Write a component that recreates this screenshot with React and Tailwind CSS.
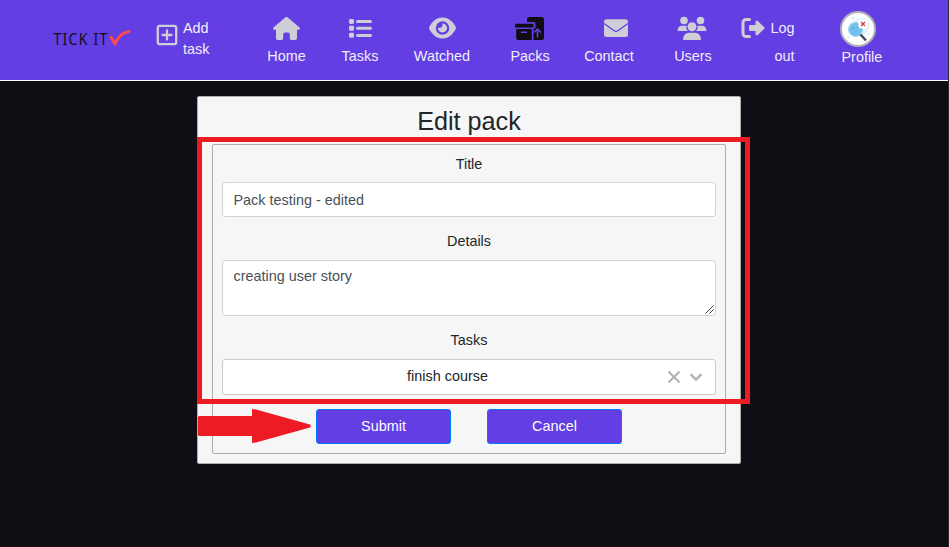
import React from "react";
import { FaEye } from "react-icons/fa6";

function HomeIcon({ className }) {
  return (
    <svg className={className} viewBox="0 0 27 24" fill="currentColor">
      <path d="M12.500 1.300Q13.500 0.500 14.500 1.300L26.300 11.300C27.300 12.400 26.600 13.800 25.400 13.800H24V22.300Q24 24 22.300 24H18.500Q16.800 24 16.800 22.300V18.300Q16.800 16.600 15.100 16.600H11.900Q10.200 16.600 10.200 18.300V22.300Q10.200 24 8.500 24H4.700Q3 24 3 22.300V13.800H1.600C0.400 13.800 -0.300 12.400 0.700 11.300Z" />
    </svg>
  );
}

function ListIcon({ className }) {
  return (
    <svg className={className} viewBox="0 0 24 24" fill="currentColor">
      <rect x="1" y="3" width="5" height="5" rx="1.400" />
      <rect x="1" y="9.700" width="5" height="5" rx="1.400" />
      <rect x="1" y="16.700" width="5" height="5" rx="1.400" />
      <rect x="8" y="3.900" width="16" height="3" rx="1.500" />
      <rect x="8" y="10.800" width="16" height="3" rx="1.500" />
      <rect x="8" y="17.900" width="16" height="3" rx="1.500" />
    </svg>
  );
}

function PacksIcon({ className }) {
  return (
    <svg className={className} viewBox="0 0 30 24">
      <path d="M12 6V3.500Q12 1 14.500 1H26.500Q29 1 29 3.500V21.500Q29 24 26.500 24H18.500V12.500H19.500Q20.500 12.500 20.500 11.500V7.500Q20.500 6 19 6Z" fill="currentColor" />
      <rect x="0" y="7.700" width="18.500" height="3.800" rx="0.900" fill="currentColor" />
      <path d="M1.200 13H16.800V24H3.200Q1.200 24 1.200 22Z" fill="currentColor" />
      <path d="M6.500 16.200H11.500" stroke="#623ee3" strokeWidth="1.400" strokeLinecap="round" />
      <path d="M22.500 20.800V13.200M19.500 16L22.500 13L25.500 16" fill="none" stroke="#623ee3" strokeWidth="1.600" strokeLinecap="round" strokeLinejoin="round" />
    </svg>
  );
}

function EnvelopeIcon({ className }) {
  return (
    <svg className={className} viewBox="0 0 24 24">
      <rect x="0" y="3.300" width="24" height="17.700" rx="2.500" fill="currentColor" />
      <path d="M0 7.500 L10.200 14.800 Q12 16 13.800 14.800 L24 7.500" fill="none" stroke="#623ee3" strokeWidth="1.200" />
    </svg>
  );
}

function UsersIcon({ className }) {
  return (
    <svg className={className} viewBox="0 0 30 24" fill="currentColor">
      <circle cx="7" cy="4.500" r="3.800" />
      <circle cx="23.500" cy="4.500" r="3.800" />
      <path d="M0.500 15C0.500 11.500 2.500 9.700 5 9.700H9.600C8.900 12 9.600 14 11 15ZM29.500 15C29.500 11.500 27.500 9.700 25 9.700H20.400C21.100 12 20.400 14 19 15Z" />
      <circle cx="15" cy="10.800" r="4.500" />
      <path d="M6 24C6 19.500 8.500 16.700 12 16.700H18C21.500 16.700 24 19.500 24 24Z" />
    </svg>
  );
}

const links = [
  { label: "Home", Icon: HomeIcon, col: "w-[74px]", icon: "w-[27px] text-[#cfcdd6]" },
  { label: "Tasks", Icon: ListIcon, col: "w-[73px]", icon: "w-6 text-[#cfcdd6]" },
  { label: "Watched", Icon: FaEye, col: "w-[91px]", icon: "w-[27px] text-[#cfcdd6]" },
  { label: "Packs", Icon: PacksIcon, col: "w-[85px]", icon: "w-[30px] text-[#100e14]" },
  { label: "Contact", Icon: EnvelopeIcon, col: "w-[73px]", icon: "ml-[13px] mr-0 w-6 text-[#cfcdd6]" },
  { label: "Users", Icon: UsersIcon, col: "w-[95px]", icon: "-ml-[3px] w-[30px] text-[#cfcdd6]" },
];

function Logo() {
  return (
    <svg className="h-6 w-20 shrink-0" viewBox="0 0 80 24">
      <text transform="translate(0.500 17) scale(0.85 1)" fontSize="16.500" letterSpacing="1.500" fill="#100e14" fontFamily="Noto Sans, sans-serif">TICK IT</text>
      <path d="M58 9 L62 16 C65 8.500 69 4.500 76 3.500" fill="none" stroke="#fd4b4f" strokeWidth="3" strokeLinecap="round" strokeLinejoin="round" />
    </svg>
  );
}

function Avatar() {
  return (
    <svg className="size-9" viewBox="0 0 36 36">
      <circle cx="18" cy="18" r="17" fill="#fff" stroke="#b0aeb8" strokeWidth="2" />
      <path d="M10 13 C13 7 27 4 29 11 C31 17 27 22 22 25 C15 28 7 22 10 13Z" fill="#dff4fb" />
      <circle cx="15.500" cy="18.500" r="7" fill="#6fc3ee" stroke="#a5daf3" />
      <path d="M12.500 17h1.500M17.500 16.500h1.500" stroke="#2f78ab" strokeWidth="1.200" />
      <path d="M20.500 23.500l5.500 6" stroke="#41464f" strokeWidth="2.400" />
      <rect x="18.500" y="8.500" width="9" height="9" rx="1.500" fill="#fff" />
      <path d="M21 11l4 4M25 11l-4 4" stroke="#e0383e" strokeWidth="1.400" />
      <path d="M12 7h1.500M7.500 26h1.500M28 23h1" stroke="#9fdcf2" strokeWidth="1.300" />
    </svg>
  );
}

function Navbar() {
  return (
    <nav className="flex h-[81px] items-start border-b border-white bg-[#623ee3] pl-[53px] text-[#f0eef8]">
      <div className="mt-[28px]"><Logo /></div>
      <a className="ml-[23px] mt-[18px] flex w-[93.5px] items-start gap-[5px] leading-[21px]">
        <svg className="mt-[6px] h-[22px] w-[22px] shrink-0 text-[#cfcdd6]" viewBox="0 0 22 22" fill="none" stroke="currentColor">
          <rect x="1.800" y="1.800" width="18.400" height="18.400" rx="2" strokeWidth="2.300" />
          <path d="M11 6.500v9M6.500 11h9" strokeWidth="2.300" strokeLinecap="round" />
        </svg>
        <span className="w-8">Add task</span>
      </a>
      {links.map(({ label, Icon, col, icon }) => (
        <a key={label} className={`mt-4 flex flex-col items-center ${col}`}>
          <Icon className={`h-6 ${icon}`} />
          <span className="mt-[5px] leading-[22px]">{label}</span>
        </a>
      ))}
      <a className="mt-4 flex w-[54px] flex-col items-end">
        <span className="flex h-6 items-center gap-[5px]">
          <svg className="size-6 shrink-0 text-[#cfcdd6]" viewBox="0 0 24 24">
            <path d="M8.500 3.500H5A3 3 0 0 0 2 6.500V17.500A3 3 0 0 0 5 20.500H8.500" fill="none" stroke="currentColor" strokeWidth="3" strokeLinecap="round" />
            <path d="M9.300 9H14.500V6C14.500 4.700 16 4.300 16.800 5.100L23.300 11.200Q24 12 23.300 12.800L16.800 18.900C16 19.700 14.500 19.300 14.500 18V15H9.300Q8 15 8 13.700V10.300Q8 9 9.300 9Z" fill="currentColor" />
          </svg>
          <span className="pt-[2px]">Log</span>
        </span>
        <span className="mt-[5px] leading-[22px]">out</span>
      </a>
      <a className="ml-[45px] mt-[11px] flex w-[37px] flex-col">
        <Avatar />
        <span className="ml-[2px] -mt-px leading-[22px]">Profile</span>
      </a>
    </nav>
  );
}

function ResizeGrip() {
  return (
    <svg className="h-[9px] w-[9px]" viewBox="0 0 9 9" fill="none" stroke="#444" strokeWidth="1">
      <path d="M0.500 8.500l8-8M4.500 8.500l4-4" />
    </svg>
  );
}

function PackForm() {
  return (
    <form className="flex h-[310px] flex-col rounded-[2px] border border-[#adadad] px-[9px] text-center text-[#212529]">
      <label className="mt-2 leading-[22px]">Title</label>
      <div className="mt-[7px] flex h-[35px] shrink-0 items-center rounded-[3px] border border-[#ced4da] bg-white px-[10.5px] pt-[2px] text-[#495057]">
        Pack testing - edited
      </div>
      <label className="mt-[13px] leading-[22px]">Details</label>
      <div className="mt-[8px] flex h-[56px] shrink-0 justify-between rounded-[3px] border border-[#ced4da] bg-white pl-[10.5px] text-[#495057]">
        <span className="mt-1 leading-[22px]">creating user story</span>
        <span className="self-end pb-px pr-px"><ResizeGrip /></span>
      </div>
      <label className="mt-[13px] leading-[22px]">Tasks</label>
      <div className="mt-[8px] flex h-[36px] shrink-0 items-center rounded-[3px] border border-[#ccc] bg-white">
        <span className="-mt-[2px] ml-2 w-[433px] leading-[22px]">finish course</span>
        <svg className="ml-1 h-3 w-3 text-[#b0b0b0]" viewBox="0 0 12 12" fill="none" stroke="currentColor" strokeWidth="2">
          <path d="M0.500 0.500l11 11M11.500 0.500l-11 11" />
        </svg>
        <svg className="ml-[10px] h-3 w-3 text-[#b0b0b0]" viewBox="0 0 12 12" fill="none" stroke="currentColor" strokeWidth="2.300">
          <path d="M0.500 3l5.500 5.500 5.500-5.500" />
        </svg>
      </div>
      <div className="mt-[14px] flex justify-start gap-9 pl-[94px] text-white">
        <button type="button" className="h-[35px] w-[135px] rounded-[3px] border border-[#007bff] bg-[#623ee3]">Submit</button>
        <button type="button" className="h-[35px] w-[135px] rounded-[3px] border border-[#007bff] bg-[#623ee3]">Cancel</button>
      </div>
    </form>
  );
}

export default function App() {
  return (
    <div className="relative h-[547px] w-[949px] overflow-hidden border-r border-[#2e2c30] bg-[#100e14] font-['Liberation_Sans',Arial,sans-serif] text-[14.4px]">
      <Navbar />
      <main className="ml-[197px] mt-[15px] h-[368px] w-[544px] rounded-[2px] border border-[#adadad] bg-[#f6f6f6] px-[14px]">
        <h1 className="h-[47px] pt-2 text-center text-[25.2px] leading-[33px] text-[#212529]">Edit pack</h1>
        <PackForm />
      </main>
      <div className="absolute left-[197px] top-[137px] h-[267px] w-[553px] border-[5px] border-[#ed1c24]" />
      <svg className="absolute left-[198px] top-[409px] h-[35px] w-[114px]" viewBox="0 0 114 35">
        <path d="M1 7H54V0L58 0.500 112 15.500 113 17 112 18.500 58 33.500 54 34V27H1L0 26V8Z" fill="#ed1c24" />
      </svg>
    </div>
  );
}
